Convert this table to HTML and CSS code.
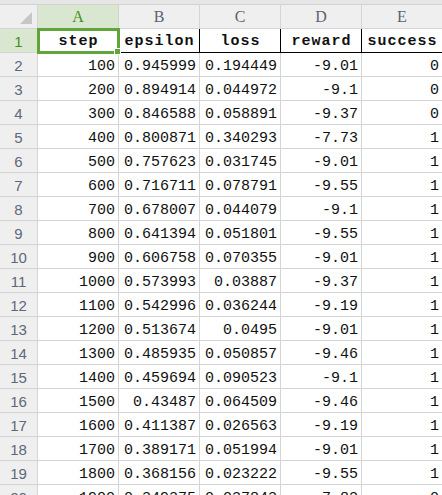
FILE: index.html
```html
<!DOCTYPE html>
<html>
<head>
<meta charset="utf-8">
<link rel="stylesheet" href="styles.css">
</head>
<body>
<div class="topbar"></div>
<div class="sheet">
  <div class="corner"><span class="tri"></span></div>
  <div class="colhead sel">A</div>
  <div class="colhead">B</div>
  <div class="colhead">C</div>
  <div class="colhead">D</div>
  <div class="colhead">E</div>

  <div class="rowhead sel">1</div>
  <div class="cell title active">step</div>
  <div class="cell title">epsilon</div>
  <div class="cell title">loss</div>
  <div class="cell title">reward</div>
  <div class="cell title">success</div>

  <div class="rowhead">2</div><div class="cell">100</div><div class="cell">0.945999</div><div class="cell">0.194449</div><div class="cell">-9.01</div><div class="cell">0</div>
  <div class="rowhead">3</div><div class="cell">200</div><div class="cell">0.894914</div><div class="cell">0.044972</div><div class="cell">-9.1</div><div class="cell">0</div>
  <div class="rowhead">4</div><div class="cell">300</div><div class="cell">0.846588</div><div class="cell">0.058891</div><div class="cell">-9.37</div><div class="cell">0</div>
  <div class="rowhead">5</div><div class="cell">400</div><div class="cell">0.800871</div><div class="cell">0.340293</div><div class="cell">-7.73</div><div class="cell">1</div>
  <div class="rowhead">6</div><div class="cell">500</div><div class="cell">0.757623</div><div class="cell">0.031745</div><div class="cell">-9.01</div><div class="cell">1</div>
  <div class="rowhead">7</div><div class="cell">600</div><div class="cell">0.716711</div><div class="cell">0.078791</div><div class="cell">-9.55</div><div class="cell">1</div>
  <div class="rowhead">8</div><div class="cell">700</div><div class="cell">0.678007</div><div class="cell">0.044079</div><div class="cell">-9.1</div><div class="cell">1</div>
  <div class="rowhead">9</div><div class="cell">800</div><div class="cell">0.641394</div><div class="cell">0.051801</div><div class="cell">-9.55</div><div class="cell">1</div>
  <div class="rowhead">10</div><div class="cell">900</div><div class="cell">0.606758</div><div class="cell">0.070355</div><div class="cell">-9.01</div><div class="cell">1</div>
  <div class="rowhead">11</div><div class="cell">1000</div><div class="cell">0.573993</div><div class="cell">0.03887</div><div class="cell">-9.37</div><div class="cell">1</div>
  <div class="rowhead">12</div><div class="cell">1100</div><div class="cell">0.542996</div><div class="cell">0.036244</div><div class="cell">-9.19</div><div class="cell">1</div>
  <div class="rowhead">13</div><div class="cell">1200</div><div class="cell">0.513674</div><div class="cell">0.0495</div><div class="cell">-9.01</div><div class="cell">1</div>
  <div class="rowhead">14</div><div class="cell">1300</div><div class="cell">0.485935</div><div class="cell">0.050857</div><div class="cell">-9.46</div><div class="cell">1</div>
  <div class="rowhead">15</div><div class="cell">1400</div><div class="cell">0.459694</div><div class="cell">0.090523</div><div class="cell">-9.1</div><div class="cell">1</div>
  <div class="rowhead">16</div><div class="cell">1500</div><div class="cell">0.43487</div><div class="cell">0.064509</div><div class="cell">-9.46</div><div class="cell">1</div>
  <div class="rowhead">17</div><div class="cell">1600</div><div class="cell">0.411387</div><div class="cell">0.026563</div><div class="cell">-9.19</div><div class="cell">1</div>
  <div class="rowhead">18</div><div class="cell">1700</div><div class="cell">0.389171</div><div class="cell">0.051994</div><div class="cell">-9.01</div><div class="cell">1</div>
  <div class="rowhead">19</div><div class="cell">1800</div><div class="cell">0.368156</div><div class="cell">0.023222</div><div class="cell">-9.55</div><div class="cell">1</div>
  <div class="rowhead">20</div><div class="cell">1900</div><div class="cell">0.349375</div><div class="cell">0.037843</div><div class="cell">-7.82</div><div class="cell">0</div>
</div>
</body>
</html>
```

FILE: styles.css
```css
html, body {
  margin: 0;
  padding: 0;
  background: #ffffff;
  overflow: hidden;
  height: 495px;
}

.topbar {
  height: 4px;
  background: #e6e6e6;
  border-bottom: 1px solid #d2d2d2;
}

.sheet {
  display: grid;
  grid-template-columns: 38px repeat(5, 81px);
  grid-auto-rows: 24px;
  width: 443px;
}

.sheet > div {
  box-sizing: border-box;
  border-right: 1px solid #d4d4d4;
  border-bottom: 1px solid #d4d4d4;
  white-space: nowrap;
  overflow: visible;
}

.corner {
  background: #efefef;
  position: relative;
}

.tri {
  position: absolute;
  right: 5px;
  bottom: 4px;
  width: 0;
  height: 0;
  border-left: 12px solid transparent;
  border-bottom: 12px solid #c6c6c6;
}

.colhead {
  background: #efefef;
  color: #5a6472;
  font-family: "Liberation Serif", "DejaVu Serif", serif;
  font-size: 16px;
  display: flex;
  align-items: center;
  justify-content: center;
  padding-top: 1px;
}

.rowhead {
  background: #efefef;
  color: #5d6878;
  font-family: "Liberation Sans", Arial, sans-serif;
  font-size: 15px;
  display: flex;
  align-items: center;
  justify-content: center;
  padding-top: 2px;
}

.colhead.sel,
.rowhead.sel {
  background: #d9e7d1;
  color: #3f8f26;
}

.cell {
  font-family: "Liberation Mono", "DejaVu Sans Mono", monospace;
  font-size: 15px;
  color: #111111;
  display: flex;
  align-items: center;
  justify-content: flex-end;
  padding: 3px 3px 0 0;
}

.cell.title {
  justify-content: center;
  font-weight: bold;
  letter-spacing: 1px;
  padding: 1px 0 0 1px;
  border-right: 1px solid #000000;
  border-bottom: 1px solid #000000;
}

.cell.active {
  position: relative;
}

.cell.active::after {
  content: "";
  position: absolute;
  left: -1px;
  top: -1px;
  right: -2px;
  bottom: -2px;
  border: 3px solid #5fa53a;
  box-sizing: border-box;
}

.cell.active::before {
  content: "";
  position: absolute;
  right: -3px;
  bottom: -3px;
  width: 5px;
  height: 5px;
  background: #5fa53a;
  border: 1px solid #ffffff;
  z-index: 2;
}
```
